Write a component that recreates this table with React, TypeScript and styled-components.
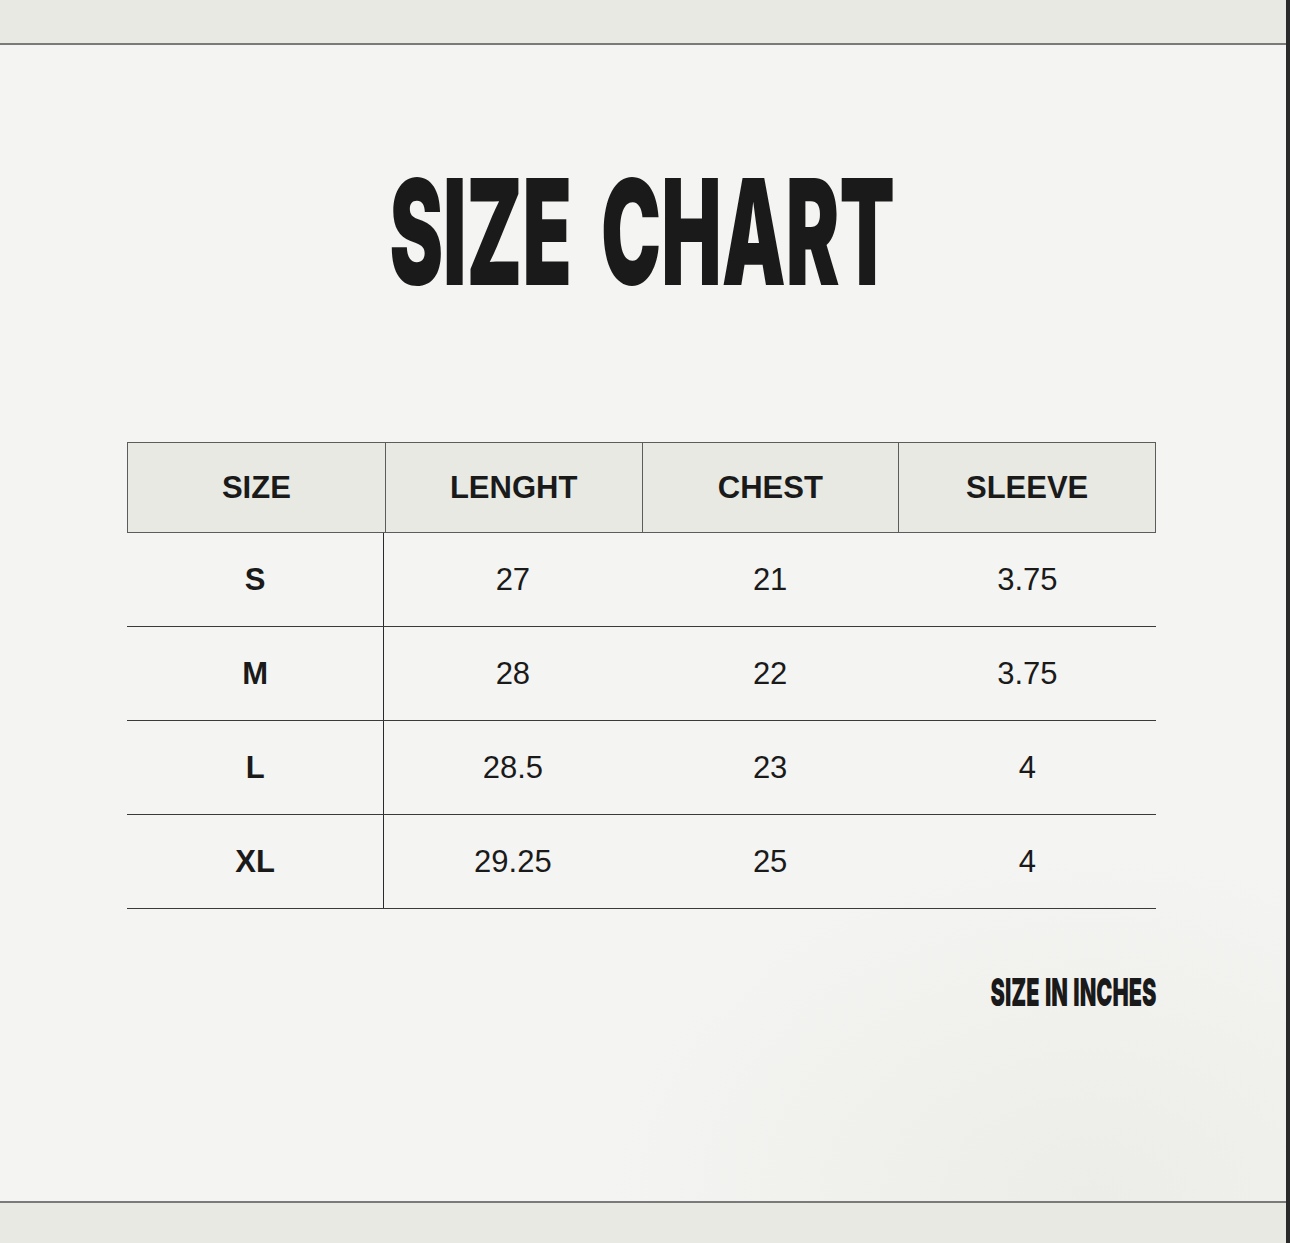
import styled, { createGlobalStyle } from 'styled-components';

const GlobalStyle = createGlobalStyle`
  html, body {
    margin: 0;
    padding: 0;
    background: #e9e9e4;
  }
  * {
    box-sizing: border-box;
  }
`;

const Frame = styled.div`
  width: 1290px;
  height: 1243px;
  display: flex;
  flex-direction: column;
  background: #e9e9e4;
  border-right: 4px solid #2a2a2a;
`;

const Band = styled.div<{ height: number }>`
  height: ${(props) => props.height}px;
  flex-shrink: 0;
  background: #e9e9e4;
`;

const Rule = styled.div`
  height: 2px;
  flex-shrink: 0;
  background: #7a7a7a;
`;

const Panel = styled.div`
  flex: 1;
  display: flex;
  flex-direction: column;
  align-items: center;
  padding-top: 131px;
  padding-right: 3px;
  background: radial-gradient(
      ellipse 700px 500px at 85% 100%,
      #ecece8 0%,
      rgba(244, 244, 242, 0) 70%
    ),
    #f4f4f2;
`;

const Title = styled.h1`
  margin: 0 0 0 2px;
  height: 110px;
  display: flex;
  justify-content: center;
  align-items: center;
  font-family: Inter, 'Liberation Sans', sans-serif;
  font-weight: 900;
  font-size: 147px;
  line-height: 1;
  color: #1a1a1a;
  letter-spacing: 0px;
  word-spacing: 24px;
  span {
    display: inline-block;
    transform: scaleX(0.548);
    white-space: nowrap;
  }
`;

const Table = styled.div`
  margin-top: 156px;
  width: 1029px;
  display: flex;
  flex-direction: column;
  font-family: 'Liberation Sans', Arial, sans-serif;
  color: #1a1a1a;
`;

const HeaderRow = styled.div`
  display: grid;
  grid-template-columns: repeat(4, 1fr);
  height: 91px;
  background: #e9e9e4;
  border: 1.5px solid #5c5c5c;
`;

const HeaderCell = styled.div`
  display: flex;
  align-items: center;
  justify-content: center;
  font-size: 31px;
  font-weight: 700;
  & + & {
    border-left: 1.5px solid #5c5c5c;
  }
`;

const BodyRow = styled.div`
  display: grid;
  grid-template-columns: repeat(4, 1fr);
  height: 94px;
  border-bottom: 1.5px solid #3a3a3a;
`;

const BodyCell = styled.div<{ isLabel?: boolean }>`
  display: flex;
  align-items: center;
  justify-content: center;
  font-size: 31px;
  font-weight: ${(props) => (props.isLabel ? '700' : '400')};
  border-right: ${(props) => (props.isLabel ? '1.5px solid #2a2a2a' : 'none')};
`;

const Note = styled.div`
  width: 1029px;
  margin-top: 63px;
  display: flex;
  justify-content: flex-end;
  font-family: Inter, 'Liberation Sans', sans-serif;
  font-weight: 900;
  font-size: 39px;
  line-height: 1;
  color: #1a1a1a;
  word-spacing: 2px;
  span {
    display: inline-block;
    transform: scaleX(0.555) translateX(1px);
    transform-origin: right center;
    white-space: nowrap;
  }
`;

const headers = ['SIZE', 'LENGHT', 'CHEST', 'SLEEVE'];

const rows = [
  { size: 'S', length: '27', chest: '21', sleeve: '3.75' },
  { size: 'M', length: '28', chest: '22', sleeve: '3.75' },
  { size: 'L', length: '28.5', chest: '23', sleeve: '4' },
  { size: 'XL', length: '29.25', chest: '25', sleeve: '4' },
];

const App = () => {
  return (
    <>
      <GlobalStyle />
      <Frame>
        <Band height={43} />
        <Rule />
        <Panel>
          <Title>
            <span>SIZE CHART</span>
          </Title>
          <Table>
            <HeaderRow>
              {headers.map((h) => (
                <HeaderCell key={h}>{h}</HeaderCell>
              ))}
            </HeaderRow>
            {rows.map((row) => (
              <BodyRow key={row.size}>
                <BodyCell isLabel>{row.size}</BodyCell>
                <BodyCell>{row.length}</BodyCell>
                <BodyCell>{row.chest}</BodyCell>
                <BodyCell>{row.sleeve}</BodyCell>
              </BodyRow>
            ))}
          </Table>
          <Note>
            <span>SIZE IN INCHES</span>
          </Note>
        </Panel>
        <Rule />
        <Band height={40} />
      </Frame>
    </>
  );
};

export default App;
